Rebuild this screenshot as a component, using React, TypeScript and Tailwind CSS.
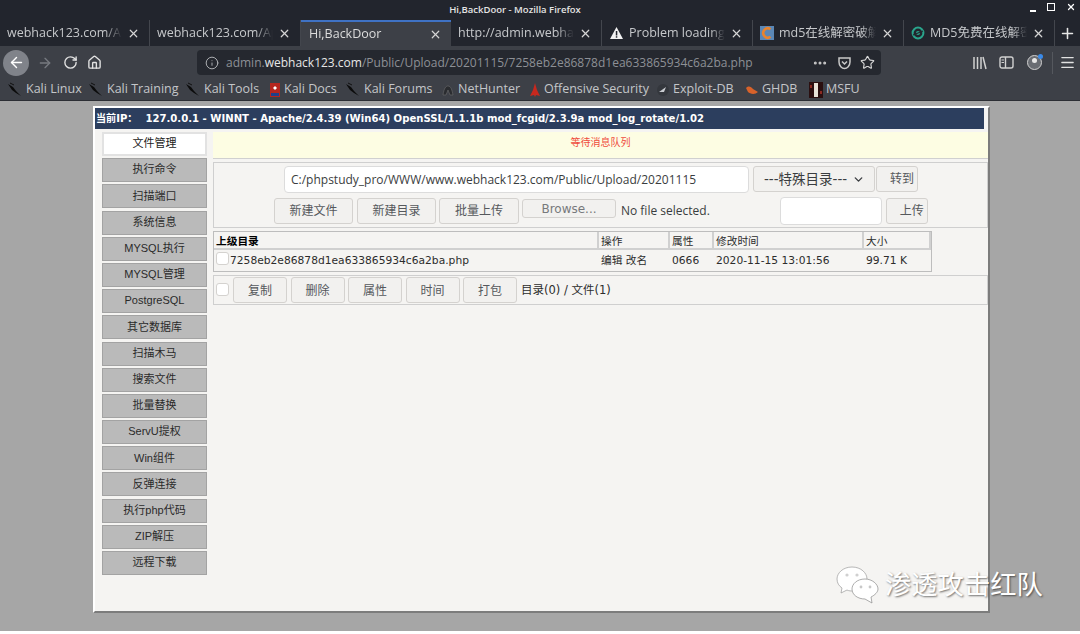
import React from "react";
import {
  ArrowLeft,
  ArrowRight,
  ChevronDown,
  Home,
  Info,
  Menu,
  MoreHorizontal,
  Plus,
  RotateCw,
  Star,
  X,
} from "lucide-react";

const sans = "font-['Open_Sans','Noto_Sans_CJK_SC',sans-serif]";
const deja = "font-['DejaVu_Sans','Noto_Sans_CJK_SC',sans-serif]";
const arial = "font-['Liberation_Sans','Noto_Sans_CJK_SC',sans-serif]";

const KaliIcon = () => (
  <svg width="16" height="16" viewBox="0 0 16 16" className="shrink-0">
    <path d="M1 2 L6 5 L9 9 L14 14 L9 11 L5 8 Z" fill="#0b0b0b" />
    <path d="M3 1 L7 3" stroke="#111" strokeWidth="1" />
  </svg>
);

const DocsIcon = () => (
  <svg width="12" height="16" viewBox="0 0 12 16" className="shrink-0">
    <rect x="1" y="1" width="10" height="14" fill="#b5261e" />
    <rect x="2" y="11" width="8" height="3" fill="#20408a" />
    <path d="M4 6 L6 4 L8 6 L6 8 Z" fill="#fff" />
  </svg>
);

const HunterIcon = () => (
  <svg width="14" height="16" viewBox="0 0 14 16" className="shrink-0">
    <path d="M2 13 C3 6 5 4 7 4 C10 4 11 8 12 13 L9 13 L7 8 L5 13 Z" fill="#2a2c30" stroke="#777" strokeWidth=".5" />
  </svg>
);

const OffsecIcon = () => (
  <svg width="12" height="16" viewBox="0 0 12 16" className="shrink-0">
    <path d="M6 1 L8 8 L11 14 L7 13 L6 15 L5 13 L1 14 L4 8 Z" fill="#c8281e" />
  </svg>
);

const ExploitIcon = () => (
  <svg width="14" height="14" viewBox="0 0 14 14" className="shrink-0">
    <circle cx="7" cy="7" r="6" fill="#34373d" />
    <path d="M3 9 L10 4 L8 9 Z" fill="#c9ccd1" />
  </svg>
);

const GhdbIcon = () => (
  <svg width="14" height="12" viewBox="0 0 14 12" className="shrink-0">
    <path d="M1 4 C4 1 6 3 8 5 L13 8 C10 11 5 10 3 8 Z" fill="#d8622a" />
  </svg>
);

const MsfuIcon = () => (
  <svg width="14" height="16" viewBox="0 0 14 16" className="shrink-0">
    <rect width="14" height="16" fill="#2a0f10" />
    <rect x="5" y="1" width="4" height="14" fill="#e8e2d8" />
    <rect x="1" y="3" width="2" height="3" fill="#8b2a22" />
    <rect x="11" y="9" width="2" height="3" fill="#8b2a22" />
  </svg>
);

const ProblemIcon = () => (
  <svg width="15" height="14" viewBox="0 0 15 14" className="shrink-0">
    <path d="M7.5 1 L14 13 L1 13 Z" fill="#f2f2f2" />
    <rect x="6.8" y="5" width="1.5" height="4.5" fill="#24272e" />
    <rect x="6.8" y="10.2" width="1.5" height="1.5" fill="#24272e" />
  </svg>
);

const CmdIcon = () => (
  <svg width="14" height="14" viewBox="0 0 14 14" className="shrink-0">
    <rect width="14" height="14" fill="#5b87b5" />
    <path d="M10.5 3.2 A4.6 4.6 0 1 0 10.5 10.8" fill="none" stroke="#e8832c" strokeWidth="2.6" />
  </svg>
);

const SomdIcon = () => (
  <svg width="14" height="14" viewBox="0 0 14 14" className="shrink-0">
    <circle cx="7" cy="7" r="5.4" fill="none" stroke="#2aa58c" strokeWidth="2" />
    <circle cx="7" cy="7" r="2" fill="#2aa58c" />
    <path d="M2 9 L12 5" stroke="#24272e" strokeWidth="1.2" />
  </svg>
);

const WeChatIcon = () => (
  <svg width="44" height="38" viewBox="0 0 44 38">
    <path
      d="M16 1 C7 1 1 7 1 13 C1 17 3 20 6 22 L5 27 L11 24 C13 25 15 25 17 25 C25 25 31 20 31 13 C31 7 25 1 16 1 Z"
      fill="#fff"
      stroke="#9a9a9a"
      strokeWidth=".7"
    />
    <path
      d="M29 13 C21 13 16 18 16 23 C16 29 22 33 29 33 L36 37 L35 31 C39 29 42 26 42 23 C42 18 36 13 29 13 Z"
      fill="#fff"
      stroke="#8a8a8a"
      strokeWidth=".7"
    />
    <circle cx="11" cy="9" r="1.6" fill="#d0d0d0" />
    <circle cx="21" cy="9" r="1.6" fill="#d0d0d0" />
    <circle cx="25" cy="21" r="1.4" fill="#c8c8c8" />
    <circle cx="34" cy="21" r="1.4" fill="#c8c8c8" />
  </svg>
);

const tabs: { title: string; icon?: React.ReactNode; active?: boolean }[] = [
  { title: "webhack123.com/App/Index" },
  { title: "webhack123.com/App/Index" },
  { title: "Hi,BackDoor", active: true },
  { title: "http://admin.webhack123.com" },
  { title: "Problem loading page", icon: <ProblemIcon /> },
  { title: "md5在线解密破解,md5解密", icon: <CmdIcon /> },
  { title: "MD5免费在线解密破解", icon: <SomdIcon /> },
];

const bookmarks: { label: string; icon: React.ReactNode; w: string }[] = [
  { label: "Kali Linux", icon: <KaliIcon />, w: "w-[81px]" },
  { label: "Kali Training", icon: <KaliIcon />, w: "w-[97px]" },
  { label: "Kali Tools", icon: <KaliIcon />, w: "w-[84px]" },
  { label: "Kali Docs", icon: <DocsIcon />, w: "w-[76px]" },
  { label: "Kali Forums", icon: <KaliIcon />, w: "w-[96px]" },
  { label: "NetHunter", icon: <HunterIcon />, w: "w-[88px]" },
  { label: "Offensive Security", icon: <OffsecIcon />, w: "w-[127px]" },
  { label: "Exploit-DB", icon: <ExploitIcon />, w: "w-[89px]" },
  { label: "GHDB", icon: <GhdbIcon />, w: "w-[64px]" },
  { label: "MSFU", icon: <MsfuIcon />, w: "w-[60px]" },
];

const sideItems = [
  "文件管理",
  "执行命令",
  "扫描端口",
  "系统信息",
  "MYSQL执行",
  "MYSQL管理",
  "PostgreSQL",
  "其它数据库",
  "扫描木马",
  "搜索文件",
  "批量替换",
  "ServU提权",
  "Win组件",
  "反弹连接",
  "执行php代码",
  "ZIP解压",
  "远程下载",
];

const Btn = ({ children, className }: { children: React.ReactNode; className: string }) => (
  <div
    className={`flex items-center justify-center rounded-[3px] border border-[#d4d2cf] bg-[#f2f1ef] text-[12px] text-[#55585c] ${deja} ${className}`}
  >
    {children}
  </div>
);

const Check = ({ className }: { className: string }) => (
  <div className={`h-[13px] w-[13px] rounded-[3px] border border-[#d4d2cf] bg-white ${className}`} />
);

const cols = [
  { h: "上级目录", w: "w-[385px]", cell: "" },
  { h: "操作", w: "w-[71px]", cell: "编辑 改名" },
  { h: "属性", w: "w-[44px]", cell: "0666" },
  { h: "修改时间", w: "w-[150px]", cell: "2020-11-15 13:01:56" },
  { h: "大小", w: "w-[67px]", cell: "99.71 K" },
];

export default function App() {
  return (
    <div className="relative flex h-[634px] w-[1080px] flex-col overflow-hidden bg-[#a6a6a6]">
      {/* title bar */}
      <div className={`relative flex h-[20px] items-center justify-center bg-[#22252d] pr-[50px] text-[9.5px] font-semibold text-[#e4e4e4] ${sans}`}>
        Hi,BackDoor - Mozilla Firefox
        <div className="absolute right-[4px] top-[2px] flex items-center gap-[11px] text-white">
          <div className="mt-[8px] h-[2px] w-[6px] bg-white" />
          <div className="h-[8px] w-[8px] border-[1.5px] border-white" />
          <X size={10} strokeWidth={3} />
        </div>
      </div>

      {/* tabs */}
      <div className={`flex h-[26px] bg-[#22252d] text-[12.5px] ${sans}`}>
        {tabs.map((t, i) => (
          <div
            key={i}
            className={
              t.active
                ? "flex w-[150px] items-center gap-[5px] border-t-2 border-[#3f72c4] bg-[#3d4047] pl-[8px] pr-[9px] text-[#dcdcdc]"
                : `flex ${i === 0 ? "w-[150px]" : "w-[151px]"} items-center gap-[5px] border-r border-[#43464d] pl-[7px] pr-[9px] text-[#c6c8cb]`
            }
          >
            {t.icon}
            <span className="min-w-0 flex-1 overflow-hidden whitespace-nowrap [mask-image:linear-gradient(to_right,#000_85%,transparent)]">
              {t.title}
            </span>
            <X size={13} strokeWidth={2.2} className="shrink-0 text-[#d5d5d5]" />
          </div>
        ))}
        <div className="flex flex-1 items-center justify-center text-[#e6e6e6]">
          <Plus size={17} strokeWidth={2.2} />
        </div>
      </div>

      {/* nav bar */}
      <div className="flex h-[30px] items-center bg-[#3d4047] pl-[3px] pt-[3px] text-[#e2e2e2]">
        <div className="flex h-[26px] w-[26px] items-center justify-center rounded-full bg-[#80838a]">
          <ArrowLeft size={17} strokeWidth={2} className="text-white" />
        </div>
        <ArrowRight size={16} strokeWidth={2} className="ml-[8px] text-[#777a80]" />
        <RotateCw size={15} strokeWidth={2.2} className="ml-[10px]" />
        <Home size={15} strokeWidth={2.2} className="ml-[9px]" />
        <div className={`ml-[95px] flex h-[25px] w-[684px] items-center rounded-[4px] bg-[#25282f] pl-[8px] pr-[6px] text-[12px] text-[#8d9096] ${sans}`}>
          <Info size={14} strokeWidth={1.6} className="shrink-0 text-[#b5b7ba]" />
          <span className="ml-[7px] flex-1 whitespace-nowrap">
            admin.<span className="text-[#e6e6e6]">webhack123.com</span>/Public/Upload/20201115/7258eb2e86878d1ea633865934c6a2ba.php
          </span>
          <MoreHorizontal size={16} strokeWidth={2.5} className="text-[#c8c8c8]" />
          <svg width="15" height="14" viewBox="0 0 15 14" fill="none" stroke="#c8c8c8" strokeWidth="1.5" className="ml-[9px]">
            <path d="M2 2 H13 V6 C13 10 10 12.5 7.5 12.5 C5 12.5 2 10 2 6 Z" />
            <path d="M5 5.5 L7.5 8 L10 5.5" />
          </svg>
          <Star size={15} strokeWidth={1.8} className="ml-[8px] text-[#d8d8d8]" />
        </div>
        <svg width="15" height="14" viewBox="0 0 15 14" fill="none" stroke="#d0d0d0" strokeWidth="1.5" className="ml-[91px]">
          <path d="M2 1 V13 M5.5 1 V13 M9 1 V13 M11 1 L14 13" />
        </svg>
        <svg width="15" height="13" viewBox="0 0 15 13" fill="none" stroke="#d0d0d0" strokeWidth="1.4" className="ml-[12px]">
          <rect x="1" y="1" width="13" height="11" rx="2" />
          <path d="M6.5 1 V12" />
          <path d="M2.5 4 H5 M2.5 6.5 H5" strokeWidth="1" />
        </svg>
        <div className="relative ml-[13px] h-[15px] w-[15px] rounded-full border border-[#d0d0d0] bg-[#6a6d73]">
          <div className="absolute left-[4px] top-[2px] h-[5px] w-[5px] rounded-full bg-[#e8e8e8]" />
          <div className="absolute -right-[2px] -top-[2px] h-[5px] w-[5px] rounded-full bg-[#3a8ae8]" />
        </div>
        <div className="ml-[10px] h-[22px] w-px bg-[#55585e]" />
        <Menu size={17} strokeWidth={1.8} className="ml-[6px]" />
      </div>

      {/* bookmarks */}
      <div className={`flex h-[25px] items-center border-b border-[#2c2e34] bg-[#3d4047] pl-[7px] pt-[3px] text-[12.5px] text-[#c4c6c9] ${sans}`}>
        {bookmarks.map((b) => (
          <div key={b.label} className={`flex items-center gap-[3px] whitespace-nowrap ${b.w}`}>
            {b.icon}
            <span>{b.label}</span>
          </div>
        ))}
      </div>

      {/* page */}
      <div className="flex-1">
        <div className="ml-[93px] mt-[5px] h-[507px] w-[897px] border-b-2 border-l-2 border-r-2 border-t-2 border-b-[#7c7c7c] border-l-white border-r-[#7c7c7c] border-t-white bg-[#f5f4f2]">
          <div className={`ml-0 flex h-[21px] w-[889px] items-center bg-[#2c3e5e] pl-[1px] text-[10.1px] font-bold text-white ${deja}`}>
            <span>当前IP：</span>
            <span className="ml-[8px]">127.0.0.1 - WINNT - Apache/2.4.39 (Win64) OpenSSL/1.1.1b mod_fcgid/2.3.9a mod_log_rotate/1.02</span>
          </div>
          <div className="mt-[3px] flex">
            {/* side menu */}
            <div className="ml-[7px] flex w-[105px] flex-col gap-[2.2px]">
              {sideItems.map((s, i) => (
                <div
                  key={s}
                  className={
                    i === 0
                      ? `flex h-[24px] items-center justify-center border-2 border-[#e2e2e2] bg-white pb-[1px] text-[11px] text-[#222] ${arial}`
                      : `flex h-[24px] items-center justify-center border border-[#a3a3a3] bg-[#bababa] pb-[1px] text-[11px] text-[#2a2a2a] ${arial}`
                  }
                >
                  {s}
                </div>
              ))}
            </div>

            {/* main */}
            <div className="ml-[6px] flex w-[775px] flex-col">
              <div className={`flex h-[27px] justify-center border-b border-[#d0d0d0] bg-[#fdfde3] pt-[3px] text-[10px] text-[#ef4b3c] ${arial}`}>
                等待消息队列
              </div>

              <div className="mt-[3px] h-[66px] border border-[#cfcfcf] bg-[#f5f4f2]">
                <div className="mt-[3px] flex items-start">
                  <div className={`ml-[70px] flex h-[27px] w-[465px] items-center rounded-[4px] border border-[#dcdcdc] bg-white pl-[6px] text-[12px] text-[#3a3d40] ${sans}`}>
                    C:/phpstudy_pro/WWW/www.webhack123.com/Public/Upload/20201115
                  </div>
                  <div className={`ml-[4px] flex h-[26px] w-[122px] items-center rounded-[3px] border border-[#d4d2cf] bg-[#f2f1ef] pl-[10px] text-[13.5px] text-[#3a3d40] ${deja}`}>
                    ---特殊目录---
                    <ChevronDown size={13} strokeWidth={2.5} className="ml-[5px]" />
                  </div>
                  <Btn className="ml-[1px] h-[26px] w-[42px] pl-[10px]">转到</Btn>
                </div>
                <div className="mt-[5px] flex items-start">
                  <Btn className="ml-[60px] h-[26px] w-[79px]">新建文件</Btn>
                  <Btn className="ml-[4px] h-[26px] w-[79px]">新建目录</Btn>
                  <Btn className="ml-[3px] h-[26px] w-[80px]">批量上传</Btn>
                  <Btn className="ml-[3px] mt-[1px] h-[19px] w-[94px] text-[#77797c]">Browse...</Btn>
                  <span className={`ml-[5px] mt-[4px] text-[12px] text-[#3a3d40] ${sans}`}>No file selected.</span>
                  <div className="-mt-[1px] ml-[70px] h-[28px] w-[102px] rounded-[4px] border border-[#dcdcdc] bg-white" />
                  <Btn className="ml-[4px] h-[26px] w-[42px] pl-[10px]">上传</Btn>
                </div>
              </div>

              <div className={`mt-[3px] h-[41px] w-[719px] border border-[#bdbdbd] text-[10.7px] text-[#2c2c2c] ${deja}`}>
                <div className="flex h-[18px]">
                  {cols.map((c, i) => (
                    <div
                      key={c.h}
                      className={`${c.w} border-b-2 border-r-2 border-[#d0d0d0] pl-[2px] pt-[1px] leading-[17px] ${i === 0 ? "font-bold text-black" : ""}`}
                    >
                      {c.h}
                    </div>
                  ))}
                </div>
                <div className="flex h-[21px] items-center">
                  {cols.map((c, i) => (
                    <div key={c.h} className={`${c.w} flex items-center pl-[2px] pt-[2px]`}>
                      {i === 0 ? (
                        <>
                          <Check className="-mt-[6px] shrink-0" />
                          <span className="ml-px">7258eb2e86878d1ea633865934c6a2ba.php</span>
                        </>
                      ) : (
                        c.cell
                      )}
                    </div>
                  ))}
                </div>
              </div>

              <div className="mt-[3px] flex h-[30px] items-center border border-[#cfcfcf]">
                <Check className="-mt-[2px] ml-[2px]" />
                {["复制", "删除", "属性", "时间", "打包"].map((b, i) => (
                  <Btn key={b} className={`h-[26px] w-[54px] pt-[1px] ${i === 0 ? "ml-[4px]" : "ml-[3.5px]"}`}>
                    {b}
                  </Btn>
                ))}
                <span className={`ml-[4px] pt-[2px] text-[11.5px] text-[#2c2c2c] ${deja}`}>目录(0) / 文件(1)</span>
              </div>
            </div>
          </div>
        </div>
      </div>
      <div className="h-[3px] bg-white" />

      {/* watermark */}
      <div className="absolute left-[836px] top-[566px] flex items-center gap-[5px]">
        <WeChatIcon />
        <span className="-mt-[3px] font-['Noto_Sans_CJK_SC',sans-serif] text-[26.3px] leading-none text-white [text-shadow:1px_1px_2px_rgba(0,0,0,0.55)]">
          渗透攻击红队
        </span>
      </div>
    </div>
  );
}
